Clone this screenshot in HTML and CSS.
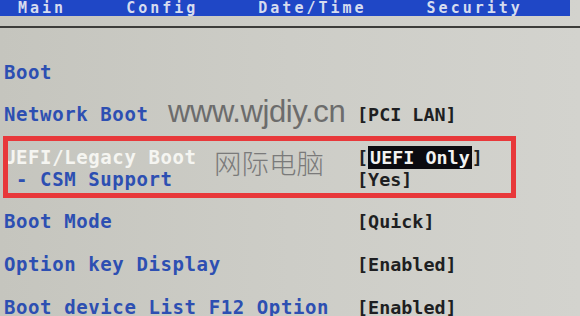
FILE: index.html
```html
<!DOCTYPE html>
<html lang="zh-CN">
<head>
<meta charset="utf-8">
<title>BIOS Boot</title>
<link rel="stylesheet" href="styles.css">
</head>
<body>
<div class="screen">
  <div class="topbar">
    <div class="menu">
      <span class="tab">Main</span>
      <span class="tab">Config</span>
      <span class="tab">Date/Time</span>
      <span class="tab">Security</span>
    </div>
  </div>
  <div class="rule"></div>
  <div class="list">
    <div class="row"><span class="label">Boot</span><span class="value"></span></div>
    <div class="row"></div>
    <div class="row"><span class="label">Network Boot</span><span class="value">[PCI LAN]</span></div>
    <div class="row"></div>
    <div class="row"><span class="label current">UEFI/Legacy Boot</span><span class="value">[<span class="hl">UEFI Only</span>]</span></div>
    <div class="row"><span class="label"> - CSM Support</span><span class="value">[Yes]</span></div>
    <div class="row"></div>
    <div class="row"><span class="label">Boot Mode</span><span class="value">[Quick]</span></div>
    <div class="row"></div>
    <div class="row"><span class="label">Option key Display</span><span class="value">[Enabled]</span></div>
    <div class="row"></div>
    <div class="row"><span class="label">Boot device List F12 Option</span><span class="value">[Enabled]</span></div>
  </div>
  <div class="mark-url">www.wjdiy.cn</div>
  <div class="mark-cn">网际电脑</div>
  <div class="annot"></div>
</div>
</body>
</html>
```
FILE: styles.css
```css
html, body {
  margin: 0;
  padding: 0;
}
body {
  width: 580px;
  height: 316px;
  overflow: hidden;
  background: #cbcbc5;
}
.screen {
  position: relative;
  width: 580px;
  height: 316px;
  overflow: hidden;
  background: linear-gradient(to right, #c5c5be 0%, #cdcdc7 50%, #d3d3ce 100%);
}
.topbar {
  width: 570px;
  height: 16px;
  background: #1f47c6;
}
.menu {
  display: flex;
  gap: 60px;
  padding-left: 18px;
}
.tab {
  font-family: "DejaVu Sans Mono", monospace;
  font-weight: bold;
  font-size: 15px;
  letter-spacing: 3px;
  line-height: 16px;
  color: #d6dcef;
  white-space: pre;
}
.rule {
  margin-top: 10px;
  height: 2px;
  background: #3d3d3a;
}
.list {
  padding-top: 33.6px;
}
.row {
  display: grid;
  grid-template-columns: 357px 1fr;
  height: 21.4px;
  line-height: 21.4px;
}
.label {
  padding-left: 4px;
  font-family: "DejaVu Sans Mono", monospace;
  font-weight: bold;
  font-size: 19px;
  letter-spacing: 0.6px;
  color: #2d4fb2;
  white-space: pre;
}
.label.current {
  color: #f5f5f1;
}
.value {
  font-family: "DejaVu Sans Mono", monospace;
  font-weight: bold;
  font-size: 18.4px;
  color: #1e1f22;
  white-space: pre;
}
.hl {
  background: #0b0b10;
  color: #f2f2f2;
  padding: 1px 2px;
}
.mark-url {
  position: absolute;
  left: 168px;
  top: 96px;
  font-family: "Liberation Sans", Arial, sans-serif;
  font-size: 31px;
  letter-spacing: -0.4px;
  line-height: 1;
  color: #6c6c6c;
}
.mark-cn {
  position: absolute;
  left: 214px;
  top: 149px;
  font-family: "Noto Sans CJK SC", sans-serif;
  font-weight: 300;
  font-size: 27.5px;
  line-height: 1;
  color: #7a7a7a;
}
.annot {
  position: absolute;
  left: 3px;
  top: 136px;
  width: 513px;
  height: 62px;
  box-sizing: border-box;
  border: 5px solid #e8383a;
}
```
